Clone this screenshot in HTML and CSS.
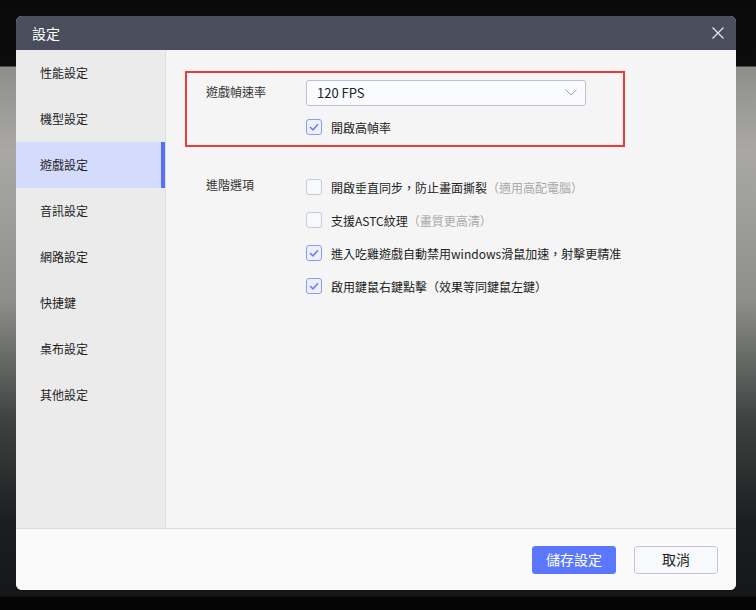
FILE: index.html
```html
<!DOCTYPE html>
<html lang="zh-Hant">
<head>
<meta charset="utf-8">
<title>設定</title>
<link rel="stylesheet" href="styles.css">
</head>
<body>
<div class="backdrop">
  <div class="dialog">
    <div class="header">
      <span class="title">設定</span>
      <svg class="close" width="12" height="12" viewBox="0 0 12 12"><path d="M0.5 0.5 L11.5 11.5 M11.5 0.5 L0.5 11.5" stroke="#e8e9ee" stroke-width="1.2" fill="none"/></svg>
    </div>
    <div class="body">
      <nav class="sidebar">
        <div class="nav-item">性能設定</div>
        <div class="nav-item">機型設定</div>
        <div class="nav-item active">遊戲設定</div>
        <div class="nav-item">音訊設定</div>
        <div class="nav-item">網路設定</div>
        <div class="nav-item">快捷鍵</div>
        <div class="nav-item">桌布設定</div>
        <div class="nav-item">其他設定</div>
      </nav>
      <main class="content">
        <section class="fps-box">
          <div class="row">
            <div class="label">遊戲幀速率</div>
            <div class="controls">
              <div class="select">
                <span>120 FPS</span>
                <svg width="12" height="7" viewBox="0 0 12 7"><path d="M0.5 0.5 L6 6 L11.5 0.5" stroke="#9da0ad" stroke-width="1" fill="none"/></svg>
              </div>
              <label class="check checked"><span class="box"><svg width="10" height="8" viewBox="0 0 10 8"><path d="M1 4 L4 6.8 L9 1.2" stroke="#6a80ef" stroke-width="1.6" fill="none"/></svg></span>開啟高幀率</label>
            </div>
          </div>
        </section>
        <section class="advanced">
          <div class="row">
            <div class="label">進階選項</div>
            <div class="controls list">
              <label class="check"><span class="box"></span>開啟垂直同步，防止畫面撕裂<span class="hint">（適用高配電腦）</span></label>
              <label class="check"><span class="box"></span>支援ASTC紋理<span class="hint">（畫質更高清）</span></label>
              <label class="check checked"><span class="box"><svg width="10" height="8" viewBox="0 0 10 8"><path d="M1 4 L4 6.8 L9 1.2" stroke="#6a80ef" stroke-width="1.6" fill="none"/></svg></span>進入吃雞遊戲自動禁用windows滑鼠加速，射擊更精准</label>
              <label class="check checked"><span class="box"><svg width="10" height="8" viewBox="0 0 10 8"><path d="M1 4 L4 6.8 L9 1.2" stroke="#6a80ef" stroke-width="1.6" fill="none"/></svg></span>啟用鍵鼠右鍵點擊（效果等同鍵鼠左鍵）</label>
            </div>
          </div>
        </section>
      </main>
    </div>
    <div class="footer">
      <button class="btn primary">儲存設定</button>
      <button class="btn">取消</button>
    </div>
  </div>
</div>
</body>
</html>
```

FILE: styles.css
```css
* { box-sizing: border-box; }
html, body { margin: 0; padding: 0; }
body {
  width: 756px;
  height: 610px;
  overflow: hidden;
  font-family: "Noto Sans CJK TC", "Noto Sans", sans-serif;
  font-size: 12px;
  color: #222;
  background: #050505;
}
.backdrop {
  width: 756px;
  height: 610px;
  padding: 16px 20px 20px 16px;
  background:
    linear-gradient(to bottom, #0a0a0a 0, #0c0c0c 66px, transparent 67px, transparent 596px, #050505 597px),
    linear-gradient(to bottom, #8e8f8c 67px, #a9a8a4 150px, #8e8f8b 300px, #3e4240 420px, #1c1f20 520px, #141718 596px);
}
.dialog {
  width: 720px;
  height: 574px;
  border-radius: 6px;
  overflow: hidden;
  display: flex;
  flex-direction: column;
  background: #fafafa;
}
.header {
  height: 34px;
  flex: none;
  background: #4a4d5c;
  display: flex;
  align-items: center;
  justify-content: space-between;
  padding: 0 12px 0 16px;
}
.title { color: #fff; font-size: 14px; margin-top: -1px; }
.close { display: block; }
.body {
  flex: 1;
  display: flex;
  min-height: 0;
  border-bottom: 1px solid #dcdcdc;
}
.sidebar {
  width: 150px;
  flex: none;
  background: #ebebeb;
  border-right: 1px solid #dedede;
}
.nav-item {
  height: 46px;
  display: flex;
  align-items: center;
  padding: 0 0 2px 24px;
  color: #222;
}
.nav-item.active {
  background: #d3dcfd;
  box-shadow: inset -4px 0 0 #5571f5;
}
.content {
  flex: 1;
  background: #f5f5f5;
  padding: 21px 0 0 19px;
}
.fps-box {
  width: 440px;
  height: 76px;
  border: 2px solid #f03a3a;
  padding: 7px 0 0 19px;
}
.row { display: flex; }
.label { width: 100px; flex: none; color: #333; line-height: 24px; }
.controls { display: flex; flex-direction: column; }
.select {
  width: 280px;
  height: 26px;
  border: 1px solid #bfc2cf;
  border-radius: 3px;
  background: #fafbfe;
  display: flex;
  align-items: center;
  justify-content: space-between;
  padding: 0 8px 1px 10px;
  color: #222;
  font-size: 13px;
}
.check {
  display: flex;
  align-items: center;
  height: 16px;
  color: #222;
  white-space: nowrap;
}
.fps-box .check { margin-top: 13px; }
.box {
  width: 16px;
  height: 16px;
  border: 1px solid #c6c9d8;
  border-radius: 3px;
  background: #f8f9fc;
  margin-right: 9px;
  display: flex;
  align-items: center;
  justify-content: center;
  flex: none;
}
.check.checked .box {
  border-color: #8c9af4;
  background: #eef1fd;
}
.hint { color: #a9a9a9; }
.advanced { padding: 30px 0 0 21px; }
.advanced .label { line-height: 20px; margin-top: -2px; }
.list { gap: 17px; padding-top: 2px; }
.footer {
  height: 61px;
  flex: none;
  display: flex;
  justify-content: flex-end;
  align-items: center;
  gap: 18px;
  padding: 0 18px 0 0;
  background: #fafafa;
}
.btn {
  width: 84px;
  height: 28px;
  border: 1px solid #c3c5d6;
  border-radius: 3px;
  background: #f8f9fd;
  font-family: "Noto Sans CJK TC", "Noto Sans", sans-serif;
  font-size: 14px;
  color: #222;
  padding: 0 0 1px;
}
.btn.primary {
  background: #5a77fd;
  border-color: #5a77fd;
  color: #fff;
}
```
